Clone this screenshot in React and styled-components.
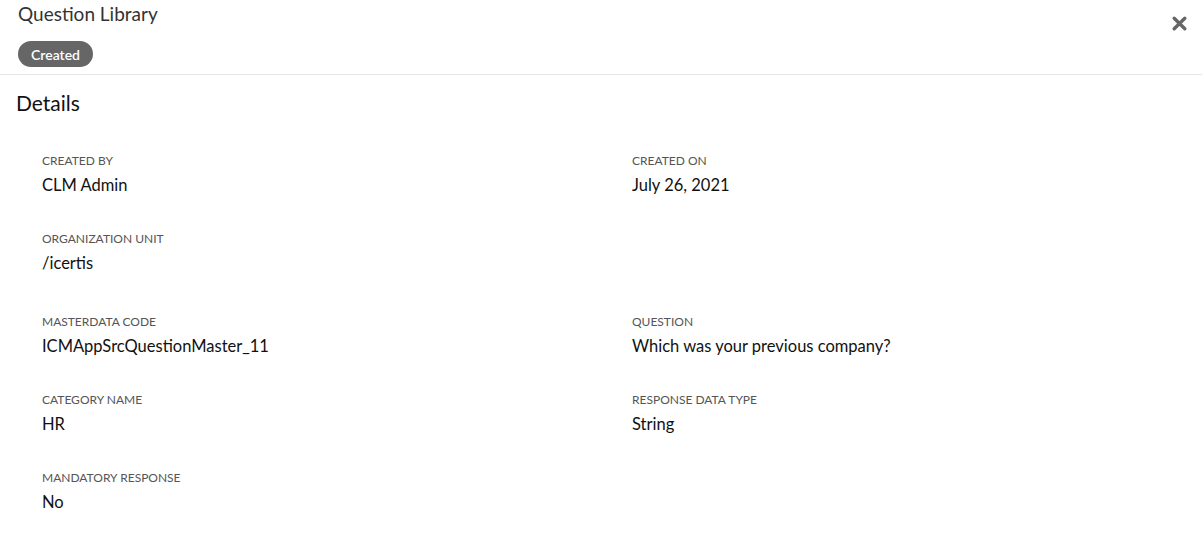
import React from "react";
import styled, { createGlobalStyle } from "styled-components";

const GlobalStyle = createGlobalStyle`
  body {
    margin: 0;
    background: #ffffff;
    font-family: Lato, "Open Sans", sans-serif;
  }
`;

const Page = styled.div`
  display: flex;
  flex-direction: column;
  width: 1202px;
  min-height: 539px;
  background: #ffffff;
`;

const Header = styled.div`
  display: flex;
  justify-content: space-between;
  align-items: flex-start;
  padding: 3px 14px 7px 18px;
  border-bottom: 1px solid #e6e6e6;
`;

const TitleBlock = styled.div`
  display: flex;
  flex-direction: column;
  align-items: flex-start;
  gap: 16px;
`;

const Title = styled.div`
  font-size: 19px;
  line-height: 22px;
  color: #333333;
`;

const Badge = styled.span`
  display: inline-flex;
  align-items: center;
  height: 26px;
  padding: 0 13px;
  border-radius: 13px;
  background: #666666;
  color: #ffffff;
  font-size: 14px;
  font-weight: 600;
`;

const CloseButton = styled.button`
  border: none;
  background: none;
  padding: 0;
  margin-top: 12px;
  cursor: pointer;
  display: flex;
`;

const Section = styled.div`
  padding: 16px 16px 0;
`;

const SectionTitle = styled.div`
  font-size: 21px;
  line-height: 24px;
  color: #111111;
`;

const Grid = styled.div`
  display: grid;
  grid-template-columns: 590px 1fr;
  row-gap: 37px;
  padding: 0 26px;
  margin-top: ${(p) => p.$top}px;
`;

const Field = styled.div`
  display: flex;
  flex-direction: column;
  gap: 7px;
`;

const Label = styled.div`
  font-size: 12px;
  line-height: 14px;
  color: #555555;
  text-transform: uppercase;
`;

const Value = styled.div`
  font-size: 16.5px;
  line-height: 20px;
  color: #111111;
`;

const groups = [
  [
    ["Created By", "CLM Admin"],
    ["Created On", "July 26, 2021"],
    ["Organization Unit", "/icertis"],
  ],
  [
    ["Masterdata Code", "ICMAppSrcQuestionMaster_11"],
    ["Question", "Which was your previous company?"],
    ["Category Name", "HR"],
    ["Response Data Type", "String"],
    ["Mandatory Response", "No"],
  ],
];

export default function App() {
  return (
    <Page>
      <GlobalStyle />
      <Header>
        <TitleBlock>
          <Title>Question Library</Title>
          <Badge>Created</Badge>
        </TitleBlock>
        <CloseButton aria-label="Close">
          <svg width="17" height="17" viewBox="0 0 16 16">
            <path d="M3 3 L13 13 M13 3 L3 13" stroke="#666666" strokeWidth="3.2" strokeLinecap="round" />
          </svg>
        </CloseButton>
      </Header>
      <Section>
        <SectionTitle>Details</SectionTitle>
        {groups.map((g, i) => (
          <Grid key={i} $top={i === 0 ? 39 : 42}>
            {g.map(([label, value]) => (
              <Field key={label}>
                <Label>{label}</Label>
                <Value>{value}</Value>
              </Field>
            ))}
          </Grid>
        ))}
      </Section>
    </Page>
  );
}
